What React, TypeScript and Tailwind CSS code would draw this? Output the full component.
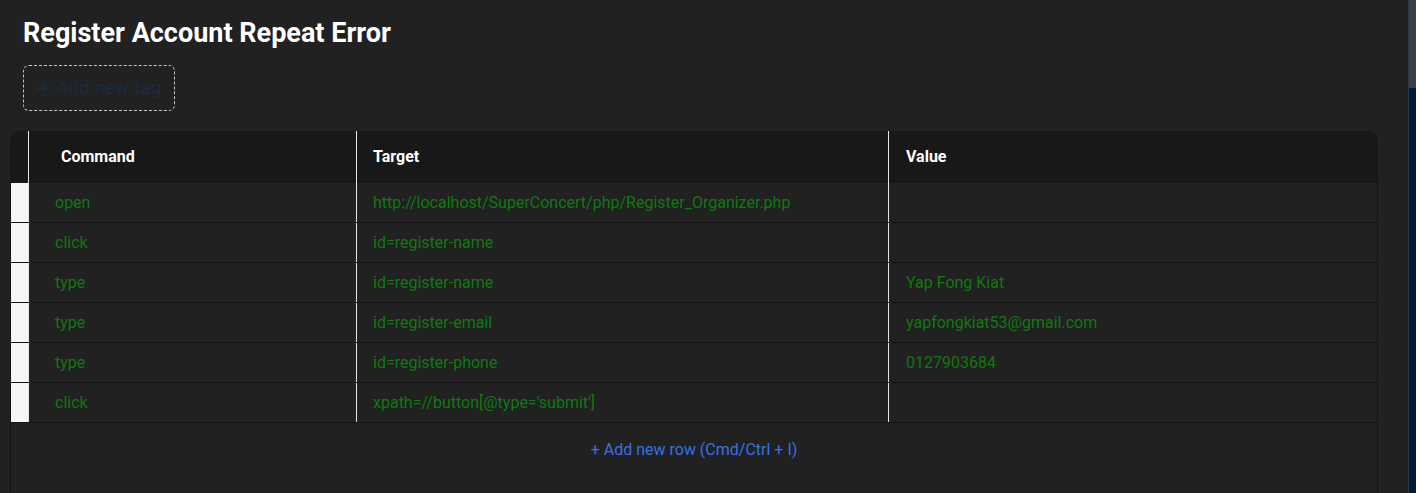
import { Plus } from "lucide-react";

const rows = [
  { command: "open", target: "http://localhost/SuperConcert/php/Register_Organizer.php", value: "" },
  { command: "click", target: "id=register-name", value: "" },
  { command: "type", target: "id=register-name", value: "Yap Fong Kiat" },
  { command: "type", target: "id=register-email", value: "yapfongkiat53@gmail.com" },
  { command: "type", target: "id=register-phone", value: "0127903684" },
  { command: "click", target: "xpath=//button[@type='submit']", value: "" },
];

export default function App() {
  return (
    <div className="h-[493px] w-full flex overflow-hidden bg-[#212121] font-['Roboto',sans-serif]">
      <div className="flex-1 flex flex-col">
        {/* Title + tags */}
        <div className="pl-[23px] pt-[15px]">
          <h1 className="text-[27px] leading-[36px] font-bold text-white">Register Account Repeat Error</h1>
          <button className="mt-[14px] w-[152px] h-[46px] flex items-center gap-[2px] pl-[9px] pt-[1px] rounded-md border border-dashed border-[#c4c4c4] text-[19px] text-[#1c2a3d]">
            <Plus className="w-[21px] h-[21px]" strokeWidth={3} />
            <span>Add new tag</span>
          </button>
        </div>

        {/* Command table */}
        <div className="mt-[20px] ml-[10px] w-[1368px] flex-1 flex flex-col">
          <div className="grid grid-cols-[19px_328px_532px_1fr] h-[52px] bg-[#181818] rounded-t-[10px] text-[16px] font-bold text-white">
            <div className="border-r border-[#e5e5e5]" />
            <div className="border-r border-[#e5e5e5] flex items-center pl-[32px]">Command</div>
            <div className="border-r border-[#e5e5e5] flex items-center pl-[16px]">Target</div>
            <div className="flex items-center pl-[17px]">Value</div>
          </div>
          <div className="flex-1 border-x border-[#141414] flex flex-col">
            {rows.map((r, i) => (
              <div
                key={i}
                className="grid grid-cols-[18px_328px_532px_1fr] h-[40px] border-b border-[#141414] text-[16px] text-[#0e790e]"
              >
                <div className="bg-[#f6f6f6] border-r border-[#e5e5e5]" />
                <div className="border-r border-[#e5e5e5] flex items-center pl-[26px] pt-[1px]">{r.command}</div>
                <div className="border-r border-[#e5e5e5] flex items-center pl-[16px] pt-[1px]">{r.target}</div>
                <div className="flex items-center pl-[17px] pt-[1px]">{r.value}</div>
              </div>
            ))}
            <div className="h-[52px] pt-[2px] flex items-center justify-center text-[16px] text-[#3572e6]">
              + Add new row (Cmd/Ctrl + I)
            </div>
          </div>
        </div>
      </div>

      {/* Scrollbar */}
      <div className="w-[8px] h-full bg-[#001a3a] border-l border-[#2b3647] flex flex-col">
        <div className="h-[88px] bg-[#3a3f4a]" />
      </div>
    </div>
  );
}
